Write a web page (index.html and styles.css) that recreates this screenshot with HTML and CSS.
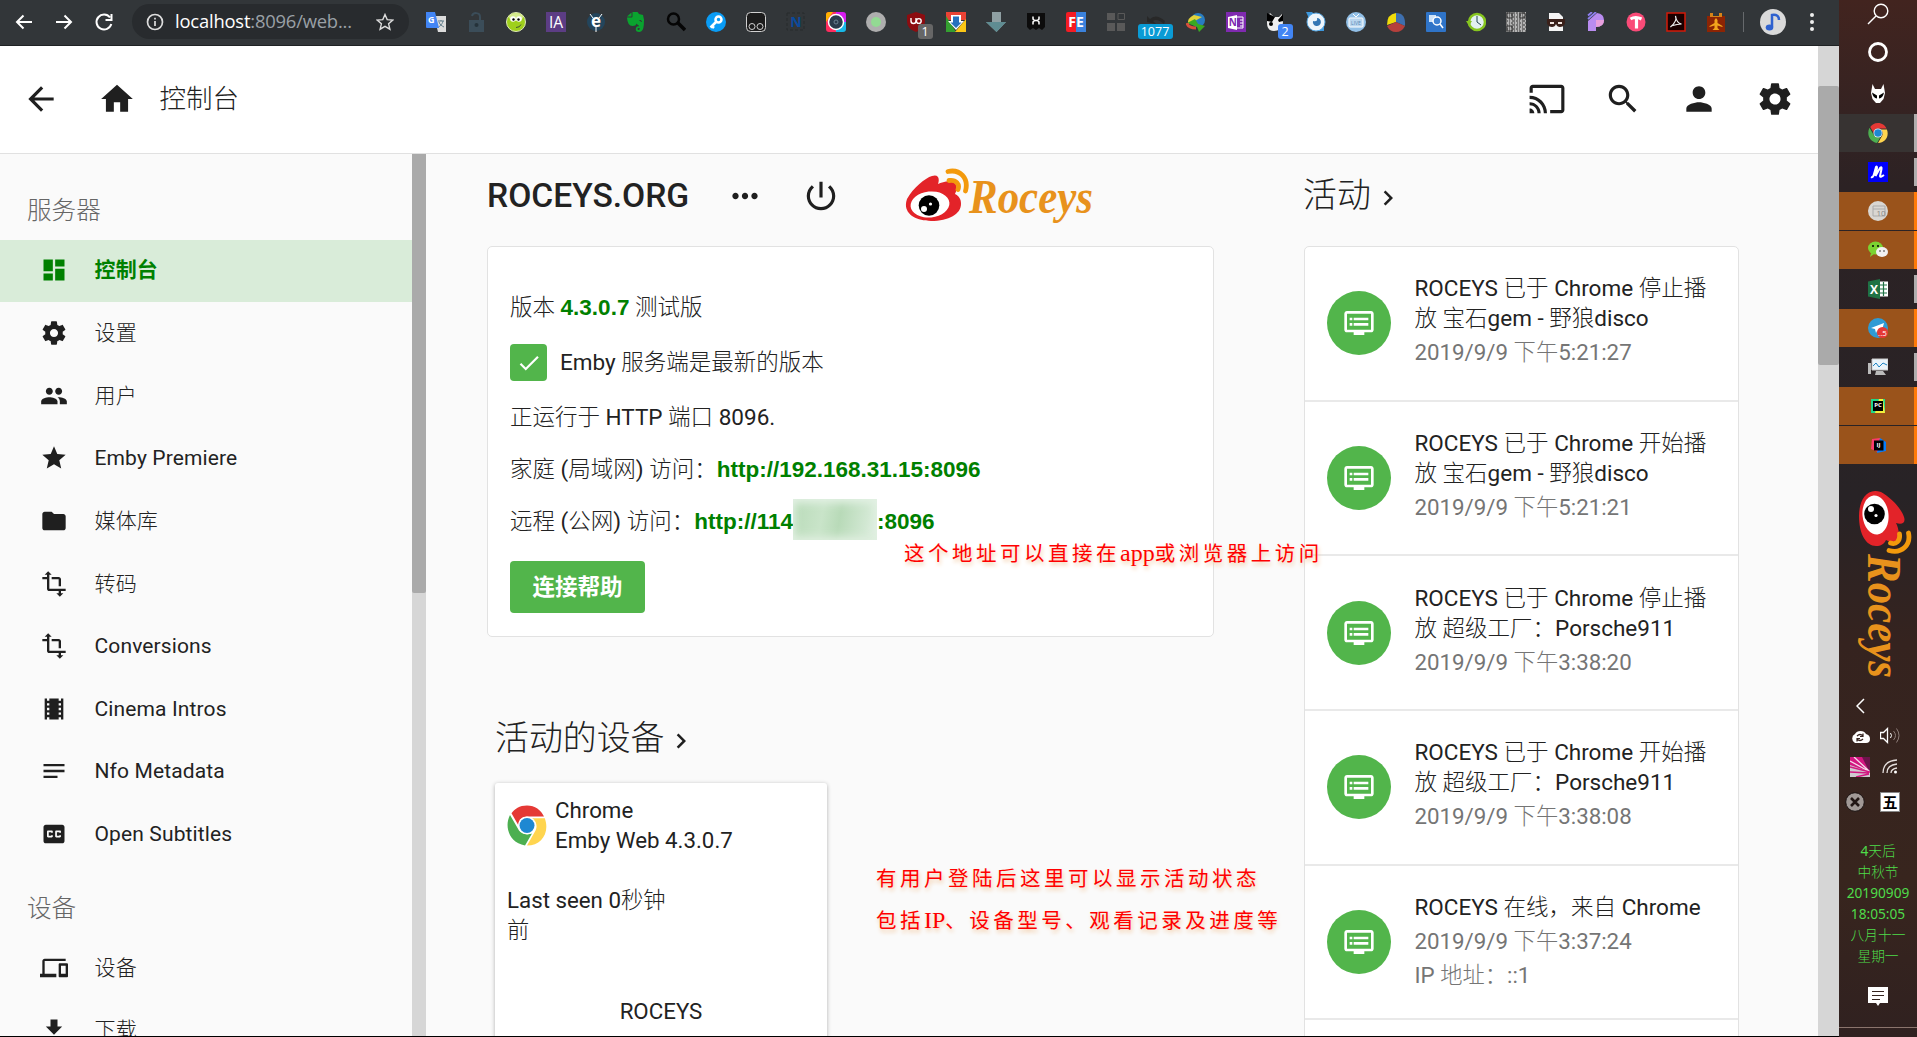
FILE: index.html
```html
<!DOCTYPE html>
<html lang="zh-CN">
<head>
<meta charset="utf-8">
<title>控制台</title>
<link rel="stylesheet" href="styles.css">
</head>
<body>
<svg class="sprite" aria-hidden="true">
  <symbol id="back" viewBox="0 0 24 24"><path d="M20 11H7.83l5.59-5.59L12 4l-8 8 8 8 1.41-1.41L7.83 13H20v-2z"/></symbol>
  <symbol id="home" viewBox="0 0 24 24"><path d="M10 20v-6h4v6h5v-8h3L12 3 2 12h3v8z"/></symbol>
  <symbol id="cast" viewBox="0 0 24 24"><path d="M21 3H3c-1.100 0-2 .9-2 2v3h2V5h18v14h-7v2h7c1.100 0 2-.9 2-2V5c0-1.100-.9-2-2-2zM1 18v3h3c0-1.660-1.340-3-3-3zm0-4v2c2.760 0 5 2.240 5 5h2c0-3.870-3.130-7-7-7zm0-4v2c4.970 0 9 4.030 9 9h2c0-6.080-4.930-11-11-11z"/></symbol>
  <symbol id="search" viewBox="0 0 24 24"><path d="M15.500 14h-.79l-.28-.27C15.410 12.590 16 11.110 16 9.500 16 5.910 13.090 3 9.500 3S3 5.910 3 9.500 5.910 16 9.500 16c1.610 0 3.090-.59 4.230-1.570l.27.28v.79l5 4.990L20.490 19l-4.990-5zm-6 0C7.010 14 5 11.990 5 9.500S7.010 5 9.500 5 14 7.010 14 9.500 11.990 14 9.500 14z"/></symbol>
  <symbol id="person" viewBox="0 0 24 24"><path d="M12 12c2.210 0 4-1.790 4-4s-1.790-4-4-4-4 1.790-4 4 1.790 4 4 4zm0 2c-2.670 0-8 1.340-8 4v2h16v-2c0-2.660-5.330-4-8-4z"/></symbol>
  <symbol id="gear" viewBox="0 0 24 24"><path d="M19.430 12.980c.04-.32.07-.64.07-.98s-.03-.66-.07-.98l2.110-1.650c.19-.15.24-.42.12-.64l-2-3.460c-.12-.22-.39-.3-.61-.22l-2.490 1c-.52-.4-1.080-.73-1.690-.98l-.38-2.650C14.460 2.180 14.250 2 14 2h-4c-.25 0-.46.18-.49.42l-.38 2.650c-.61.25-1.170.59-1.690.98l-2.490-1c-.23-.09-.49 0-.61.22l-2 3.460c-.13.22-.07.49.12.64l2.110 1.650c-.04.32-.07.65-.07.98s.03.66.07.98l-2.110 1.650c-.19.15-.24.42-.12.64l2 3.460c.12.22.39.3.61.22l2.490-1c.52.4 1.080.73 1.690.98l.38 2.650c.03.24.24.42.49.42h4c.25 0 .46-.18.49-.42l.38-2.650c.61-.25 1.170-.59 1.690-.98l2.490 1c.23.09.49 0 .61-.22l2-3.460c.12-.22.07-.49-.12-.64l-2.110-1.650zM12 15.500c-1.930 0-3.500-1.570-3.500-3.500s1.570-3.500 3.500-3.500 3.500 1.570 3.500 3.500-1.570 3.500-3.500 3.500z"/></symbol>
  <symbol id="dash" viewBox="0 0 24 24"><path d="M3 13h8V3H3v10zm0 8h8v-6H3v6zm10 0h8V11h-8v10zm0-18v6h8V3h-8z"/></symbol>
  <symbol id="people" viewBox="0 0 24 24"><path d="M16 11c1.660 0 2.990-1.340 2.990-3S17.660 5 16 5s-3 1.340-3 3 1.340 3 3 3zm-8 0c1.660 0 2.990-1.340 2.990-3S9.660 5 8 5 5 6.340 5 8s1.340 3 3 3zm0 2c-2.330 0-7 1.170-7 3.500V19h14v-2.500c0-2.330-4.670-3.500-7-3.500zm8 0c-.29 0-.62.02-.97.05 1.160.84 1.970 1.970 1.970 3.450V19h6v-2.500c0-2.330-4.670-3.500-7-3.500z"/></symbol>
  <symbol id="star" viewBox="0 0 24 24"><path d="M12 17.270L18.180 21l-1.640-7.030L22 9.240l-7.190-.61L12 2 9.190 8.630 2 9.240l5.460 4.730L5.820 21z"/></symbol>
  <symbol id="folder" viewBox="0 0 24 24"><path d="M10 4H4c-1.100 0-2 .9-2 2v12c0 1.100.9 2 2 2h16c1.100 0 2-.9 2-2V8c0-1.100-.9-2-2-2h-8l-2-2z"/></symbol>
  <symbol id="transform" viewBox="0 0 24 24"><path d="M22 18v-2H8V4h2L7 1 4 4h2v2H2v2h4v8c0 1.100.9 2 2 2h8v2h-2l3 3 3-3h-2v-2h4zM10 8h6v6h2V8c0-1.100-.9-2-2-2h-6v2z"/></symbol>
  <symbol id="film" viewBox="0 0 24 24"><path d="M18 3v2h-2V3H8v2H6V3H4v18h2v-2h2v2h8v-2h2v2h2V3h-2zM8 17H6v-2h2v2zm0-4H6v-2h2v2zm0-4H6V7h2v2zm10 8h-2v-2h2v2zm0-4h-2v-2h2v2zm0-4h-2V7h2v2z"/></symbol>
  <symbol id="notes" viewBox="0 0 24 24"><path d="M3 18h12v-2H3v2zM3 6v2h18V6H3zm0 7h18v-2H3v2z"/></symbol>
  <symbol id="cc" viewBox="0 0 24 24"><path d="M19 4H5c-1.110 0-2 .9-2 2v12c0 1.100.89 2 2 2h14c1.100 0 2-.9 2-2V6c0-1.100-.9-2-2-2zm-8 7H9.500v-.5h-2v3h2V13H11v1c0 .55-.45 1-1 1H7c-.55 0-1-.45-1-1v-4c0-.55.45-1 1-1h3c.55 0 1 .45 1 1v1zm7 0h-1.500v-.5h-2v3h2V13H18v1c0 .55-.45 1-1 1h-3c-.55 0-1-.45-1-1v-4c0-.55.45-1 1-1h3c.55 0 1 .45 1 1v1z"/></symbol>
  <symbol id="devices" viewBox="0 0 24 24"><path d="M4 6h18V4H4c-1.100 0-2 .9-2 2v11H0v3h14v-3H4V6zm19 2h-6c-.55 0-1 .45-1 1v10c0 .55.45 1 1 1h6c.55 0 1-.45 1-1V9c0-.55-.45-1-1-1zm-1 9h-4v-7h4v7z"/></symbol>
  <symbol id="download" viewBox="0 0 24 24"><path d="M19 9h-4V3H9v6H5l7 7 7-7zM5 18v2h14v-2H5z"/></symbol>
  <symbol id="power" viewBox="0 0 24 24"><path d="M13 3h-2v10h2V3zm4.830 2.170l-1.420 1.420C17.990 7.860 19 9.810 19 12c0 3.870-3.130 7-7 7s-7-3.130-7-7c0-2.190 1.010-4.140 2.580-5.420L6.170 5.170C4.230 6.820 3 9.260 3 12c0 4.970 4.030 9 9 9s9-4.030 9-9c0-2.740-1.230-5.180-3.170-6.830z"/></symbol>
  <symbol id="more" viewBox="0 0 24 24"><path d="M6 10c-1.100 0-2 .9-2 2s.9 2 2 2 2-.9 2-2-.9-2-2-2zm12 0c-1.100 0-2 .9-2 2s.9 2 2 2 2-.9 2-2-.9-2-2-2zm-6 0c-1.100 0-2 .9-2 2s.9 2 2 2 2-.9 2-2-.9-2-2-2z"/></symbol>
  <symbol id="chevron" viewBox="0 0 24 24"><path d="M10 6L8.590 7.410 13.170 12l-4.580 4.590L10 18l6-6z"/></symbol>
  <symbol id="check" viewBox="0 0 24 24"><path d="M9 16.170L4.830 12l-1.420 1.410L9 19 21 7l-1.410-1.410z"/></symbol>
  <symbol id="dvr" viewBox="0 0 24 24"><path d="M21 3H3c-1.100 0-2 .9-2 2v12c0 1.100.9 2 2 2h5v2h8v-2h5c1.100 0 1.990-.9 1.990-2L23 5c0-1.100-.9-2-2-2zm0 14H3V5h18v12zm-2-9H8v2h11V8zm0 4H8v2h11v-2zM7 8H5v2h2V8zm0 4H5v2h2v-2z"/></symbol>
  <symbol id="chrome" viewBox="0 0 40 40">
    <path fill="#e53935" d="M20 0C12.500 0 7.500 3.500 4.500 7.800L11.500 20C11.500 14 15 11 20 11h17C34 4.500 28 0 20 0z"/>
    <path fill="#4caf50" d="M3 9.500C-3 21 2 37 18 40l7-12C20 30 14 28 12 25z"/>
    <path fill="#ffd54f" d="M37.800 12.800H25C29.500 16 31 21 28 26l-8 14c14.500 0 23-13 17.800-27.200z"/>
    <circle cx="20" cy="20" r="9" fill="#fff"/><circle cx="20" cy="20" r="7.500" fill="#1e88d2"/>
  </symbol>
  <symbol id="logo" viewBox="0 0 188 56">
    <path fill="#e32329" d="M27 8C20 10 8 20 2 31C-3 45 10 53 26 53C44 53 56 46 56 36C56 31 54 28 50 26C52 22 53 16 48 14C44 12 37 14 33 16C35 10 33 6 27 8z"/>
    <ellipse cx="25" cy="36.500" rx="19.500" ry="13" fill="#fff" transform="rotate(-6 25 36.500)"/>
    <circle cx="24" cy="37.500" r="10.300" fill="#000"/>
    <circle cx="19" cy="41" r="3" fill="#fff"/><circle cx="25.500" cy="36" r="1.600" fill="#fff"/>
    <path d="M43 3.500C55 1 64 10 60.500 23M44 12.500C51 11.500 55 16 53 21.500" fill="none" stroke="#f39a0c" stroke-width="4.800" stroke-linecap="round"/>
    <text x="64" y="44.500" textLength="124" lengthAdjust="spacingAndGlyphs" class="logo-text">Roceys</text>
  </symbol>
</svg>

<div class="browser">
  <div class="toolbar">
    <div class="nav">
      <svg viewBox="0 0 20 20"><path d="M18 10H3M9.500 3.500L3 10l6.500 6.500"/></svg>
      <svg viewBox="0 0 20 20"><path d="M2 10h15M10.500 3.500L17 10l-6.500 6.500"/></svg>
      <svg viewBox="0 0 20 20"><path d="M16 5.500A7.500 7.500 0 1 0 17.300 12M17.500 2v6h-6"/></svg>
    </div>
    <div class="omnibox">
      <svg class="info" viewBox="0 0 18 18"><circle cx="9" cy="9" r="7.500"/><path d="M9 8v5M9 4.800v1.800"/></svg>
      <span class="url"><b>localhost</b>:8096/web...</span>
      <svg class="fav" viewBox="0 0 18 18"><path d="M9 1.500l2.200 5.100 5.600.5-4.200 3.700 1.300 5.400L9 13.300l-4.900 2.900 1.300-5.400L1.200 7.100l5.600-.5z"/></svg>
    </div>
    <div class="exts">
      <i><svg viewBox="0 0 20 20"><path fill="#dcdcdc" d="M8 4h12v16H12z"/><path d="M12 9h6M15 8v1M17 9c-1 4-3 5-4.500 6M13 10c1 3 3 4 5 5" stroke="#607d8b" fill="none"/><path fill="#4285f4" d="M0 0h9l4 16H1a1 1 0 0 1-1-1z"/><text x="2" y="11" font-size="9" font-weight="700" fill="#fff">G</text></svg></i>
      <i><svg viewBox="0 0 20 20"><path fill="#3b4d59" d="M3 8h15v12H3z"/><path d="M6 4c1-4 8-4 8 1v3" fill="none" stroke="#3b4d59" stroke-width="2"/><circle cx="10.500" cy="13" r="2" fill="#25323a"/></svg></i>
      <i><svg viewBox="0 0 20 20"><circle cx="10" cy="10" r="9.500" fill="#9fd01c" stroke="#dfe8b8"/><ellipse cx="10" cy="5" rx="7" ry="4" fill="#d6ec8e"/><circle cx="7" cy="7" r="2.800" fill="#fff"/><circle cx="13" cy="7" r="2.800" fill="#fff"/><circle cx="7.500" cy="7.500" r="1.200"/><circle cx="12.500" cy="7.500" r="1.200"/><path d="M10 15.500q4 0 5-3" fill="none" stroke="#453"/></svg></i>
      <i><svg viewBox="0 0 20 20"><path fill="#5c3d84" d="M0 0h20v20H0z"/><text x="10" y="15.500" font-size="15.500" text-anchor="middle" fill="#fff">IA</text></svg></i>
      <i><svg viewBox="0 0 20 20"><circle cx="10" cy="10" r="9" fill="#23455c"/><text x="10" y="15" font-size="17" font-weight="700" text-anchor="middle" fill="#fff">e</text><path d="M4 2l3 4M16 2l-3 4M10 14v6" stroke="#fff"/></svg></i>
      <i><svg viewBox="0 0 20 20"><path fill="#0aa32f" d="M6.500 0h5l1.500 2 4 1q1.500 4 .8 10-.5 7-4.500 7-4 0-3.500-3.500.5-3 3.700-2v1.500q-2-.5-2 1 0 1.200 1.500 1 1.500-1-.2-4.500-1.800-1-2.300-2-.5 2.500-4 2.500-5 0-5.500-8.500h4.500q1 0 1-1z"/><path d="M1 4.500L5.500.5v4z" fill="#0aa32f"/><path d="M13.500 8.500q2-.5 2 1.500" stroke="#323639" fill="none"/></svg></i>
      <i><svg viewBox="0 0 20 20"><circle cx="7.500" cy="7" r="5.500" fill="none" stroke="#050505" stroke-width="2.500"/><path d="M12 11l7 7" stroke="#050505" stroke-width="3.500"/></svg></i>
      <i><svg viewBox="0 0 20 20"><circle cx="10" cy="10" r="10" fill="#0a9cf5"/><circle cx="12.500" cy="7.500" r="3" fill="none" stroke="#fff" stroke-width="2.500"/><path d="M10.500 9.500L4.500 15.500M6 14l2 2" stroke="#fff" stroke-width="2.500"/></svg></i>
      <i><svg viewBox="0 0 20 20"><rect x=".5" y=".5" width="19" height="19" rx="4" fill="#1c1c1c" stroke="#d0d0d0"/><circle cx="6" cy="14.500" r="3" fill="none" stroke="#d0d0d0"/><circle cx="14" cy="14.500" r="3" fill="none" stroke="#d0d0d0"/></svg></i>
      <i><svg viewBox="0 0 20 20"><rect x="1" y="1" width="17" height="17" fill="none" stroke="#272b2d" stroke-dasharray="3 2"/><text x="10" y="14.500" font-size="14" font-weight="700" text-anchor="middle" fill="#0a4a9c">N</text></svg></i>
      <i><svg viewBox="0 0 20 20"><path fill="#ff2b5e" d="M3 0h7v20H3a3 3 0 0 1-3-3V3a3 3 0 0 1 3-3z"/><path fill="#ffb300" d="M0 10V3a3 3 0 0 1 3-3h4z"/><path fill="#d61cf0" d="M10 0h7a3 3 0 0 1 3 3v7H10z"/><path fill="#18b9e8" d="M10 10h10v7a3 3 0 0 1-3 3h-7z"/><circle cx="10" cy="10" r="7.500" fill="#2b3b4b" stroke="#fff" stroke-width="1.500"/><circle cx="10" cy="10" r="2" fill="none" stroke="#6c8090"/></svg></i>
      <i><svg viewBox="0 0 20 20"><circle cx="10" cy="10" r="10" fill="#aeaeae"/><circle cx="10" cy="10" r="5" fill="#93da93"/></svg></i>
      <i><svg viewBox="0 0 20 20"><path fill="#8c0c10" d="M10 0l9 3v6q0 8-9 11Q1 17 1 9V3z"/><path d="M5 6v3q0 2.500 2.500 2.500T10 9V6" fill="none" stroke="#fff" stroke-width="1.400"/><circle cx="12.800" cy="9" r="2.400" fill="none" stroke="#fff" stroke-width="1.400"/></svg><span class="badge b-gray">1</span></i>
      <i><svg viewBox="0 0 20 20"><path fill="#ea4335" d="M0 0h20v8H0z"/><path fill="#34a030" d="M0 4l10 16H0z"/><path fill="#fbc716" d="M20 7v13H9z"/><path fill="#fff" d="M5 3h10v6h3l-8 9-8-9h3z"/><path fill="#2670bd" d="M7 4.500h6v6h2.500L10 16l-5.500-5.500H7z"/></svg></i>
      <i><svg viewBox="0 0 20 20"><path fill="#8fa0a3" d="M6 0h9v10h5l-9.500 10L0 10h6z"/><path fill="#5f8c92" d="M0 10h20l-9.500 10z"/></svg></i>
      <i><svg viewBox="0 0 20 20"><path fill="#0c0c0c" d="M1 1h18v14l-3 3-3-2-3 2-3-2-3 2-3-3z"/><path d="M7 4.500v2q0 2 3 2t3-2v-2M7 12.500v-2q0-2 3-2t3 2v2" fill="none" stroke="#fff" stroke-width="1.500"/></svg></i>
      <i><svg viewBox="0 0 20 20"><rect width="20" height="20" rx="2" fill="#f51c24"/><path fill="#3b82dc" d="M10 0h10v20H10z"/><text x="10" y="15" font-size="14" font-weight="700" text-anchor="middle" fill="#fff">FE</text></svg></i>
      <i><svg viewBox="0 0 20 20"><path fill="#595959" d="M1 1h8v7H1zM1 11h8v8H1zM11 11h8v8h-8z"/><path fill="none" stroke="#595959" d="M12 1.500h6.500v6H12z"/></svg></i>
      <i><svg viewBox="0 0 20 20"><path fill="#282828" d="M1 10V4l3 3q6-6 15 2l-1 3q-7-6-11-3l3 3z"/></svg><span class="badge b-cyan">1077</span></i>
      <i><svg viewBox="0 0 20 20"><circle cx="12" cy="8" r="7" fill="#287cc2"/><path fill="#e2d33a" d="M2 12Q1 6 8 3l8 2-9 5z"/><path fill="#3ba922" d="M9 7l3 5 7 2-6 6-2-5-10-4z"/><path d="M1 11q1 5 9 5" stroke="#d94e3b" fill="none" stroke-width="3"/></svg></i>
      <i><svg viewBox="0 0 20 20"><path fill="#7f2ab0" d="M0 0h20v20H0z"/><path fill="none" stroke="#fff" d="M11 5h6v11h-6M14 8h3M14 11h3M14 14h3"/><path fill="#fff" d="M2 5l9-2v15l-9-2z"/><text x="6.700" y="14" font-size="10" font-weight="700" text-anchor="middle" fill="#7f2ab0">N</text></svg></i>
      <i><svg viewBox="0 0 20 20"><path fill="#eee" d="M1 6l3-5 4 4h5l3-3 1 9q-2 8-9 8t-7-8z"/><path d="M1 1l8 4-3 5-5-1zM12 8l5-6v7l-4 1z"/><circle cx="5" cy="12" r="2"/></svg><span class="badge b-blue">2</span></i>
      <i><svg viewBox="0 0 20 20"><path fill="#3d97dc" d="M0 0h6l12 12v7H9z"/><circle cx="10" cy="10" r="9" fill="#eef6fc" stroke="#5aa8e2"/><path fill="#3477b5" d="M7 9a4 4 0 1 0 4-3q1 4-4 3z"/></svg></i>
      <i><svg viewBox="0 0 20 20"><circle cx="10" cy="10" r="10" fill="#91bfe6"/><rect x="3" y="6" width="14" height="9" rx="1" fill="#b9d5ee" stroke="#fff"/><path d="M7 2l3 3 3-3" stroke="#fff" fill="none"/><text x="10" y="12.500" font-size="5" text-anchor="middle" fill="#5686b5">LIVE</text></svg></i>
      <i><svg viewBox="0 0 20 20"><path fill="#f0dc0a" d="M10 10V1Q1 2 1 13z"/><path fill="#3e6fae" d="M10 10V1q10 0 9 13z"/><path fill="#b5403c" d="M10 10L1 14q3 6 9 6t9-6z"/></svg></i>
      <i><svg viewBox="0 0 20 20"><rect width="20" height="20" rx="1" fill="#2f74c8"/><path fill="#cfe3f8" d="M3 3h7v7H3z"/><circle cx="11" cy="9" r="4" fill="#3d81d2" stroke="#fff" stroke-width="1.500"/><path d="M14 12l3 4" stroke="#fff" stroke-width="1.600"/></svg></i>
      <i><svg viewBox="0 0 20 20"><circle cx="11" cy="10" r="8" fill="#e3f0f0" stroke="#86c51f" stroke-width="2.500"/><path d="M11 4v6l4 3" fill="none" stroke="#245"/><path fill="#86c51f" d="M0 9h6l-3 5z"/></svg></i>
      <i><svg viewBox="0 0 20 20"><path fill="#b4b4b4" d="M0 0h20v20H0z"/><path d="M0 1h20M0 5h20M0 9h20M0 13h20M0 17h20" stroke="#333" stroke-width="1" stroke-dasharray="2 1 1 2 3 1"/><path d="M0 3h20M0 7h20M0 11h20M0 15h20M0 19h20" stroke="#333" stroke-width="1" stroke-dasharray="1 2 1 1 2 1"/><path d="M1 1h5v5H1zM14 1h5v5h-5zM1 14h5v5H1z" fill="none" stroke="#333"/></svg></i>
      <i><svg viewBox="0 0 20 20"><path fill="#f4f4f4" d="M3 1h10l4 4v14H3z"/><path fill="#3a201a" d="M1 7h18q1 8-5 8-3 0-4-3-1 3-4 3-6 0-5-8z"/><path fill="#f0e5e0" d="M4 10h4v2H4zM12 10h4v2h-4z"/></svg></i>
      <i><svg viewBox="0 0 20 20"><path fill="#b98cf0" d="M2 12V9l9-8q7 1 7 7 0 7-8 7v4H2z"/><path fill="#e9a0dc" d="M18 8q0 7-8 7V8z"/><path d="M2 7l8-7M2 3.500L6 0" stroke="#8f7ff0" stroke-width="1.800"/></svg></i>
      <i><svg viewBox="0 0 20 20"><circle cx="10" cy="10" r="9.500" fill="#fa4b78"/><path d="M4.500 7q5-3 11 0M10.500 6.500v10" stroke="#fff" stroke-width="3.200" fill="none"/></svg></i>
      <i><svg viewBox="0 0 20 20"><path fill="#1b0000" stroke="#d31a08" stroke-width="1.500" d="M1 1h18v18H1z"/><path d="M9.500 4q2 5-5 11 1-2 11-3-5-1-6-8z" fill="none" stroke="#eee" stroke-width="1.200"/></svg></i>
      <i><svg viewBox="0 0 20 20"><path fill="#8c2404" d="M1 4h18v16H1z"/><path fill="#d78318" d="M4 1h3v3h6V1h3v4H4z"/><path fill="#f2a51c" d="M10 6l1.500 2v3l5 3v1l-5-1.500v2.500l2 2h-7l2-2v-2.500l-5 1.500v-1l5-3V8z"/></svg></i>
    </div>
    <span class="divider"></span>
    <svg class="avatar" viewBox="0 0 26 26"><circle cx="13" cy="13" r="13" fill="#dadada"/><path d="M12 18V6q7-1 7 5" fill="none" stroke="#2f62cf" stroke-width="2.500"/><ellipse cx="9.500" cy="18.500" rx="3.800" ry="3" fill="#2f62cf"/></svg>
    <svg class="kebab" viewBox="0 0 4 18"><circle cx="2" cy="2" r="2"/><circle cx="2" cy="9" r="2"/><circle cx="2" cy="16" r="2"/></svg>
  </div>

  <div class="viewport">
    <div class="page">
      <header class="header">
        <svg class="ic"><use href="#back"/></svg>
        <svg class="ic home"><use href="#home"/></svg>
        <h1>控制台</h1>
        <div class="actions">
          <svg class="ic"><use href="#cast"/></svg>
          <svg class="ic"><use href="#search"/></svg>
          <svg class="ic"><use href="#person"/></svg>
          <svg class="ic"><use href="#gear"/></svg>
        </div>
      </header>
      <div class="body">
        <nav class="sidebar">
          <h2>服务器</h2>
          <a class="on"><svg><use href="#dash"/></svg>控制台</a>
          <a><svg><use href="#gear"/></svg>设置</a>
          <a><svg><use href="#people"/></svg>用户</a>
          <a><svg><use href="#star"/></svg>Emby Premiere</a>
          <a><svg><use href="#folder"/></svg>媒体库</a>
          <a><svg><use href="#transform"/></svg>转码</a>
          <a><svg><use href="#transform"/></svg>Conversions</a>
          <a><svg><use href="#film"/></svg>Cinema Intros</a>
          <a><svg><use href="#notes"/></svg>Nfo Metadata</a>
          <a><svg><use href="#cc"/></svg>Open Subtitles</a>
          <h2 class="second">设备</h2>
          <a><svg><use href="#devices"/></svg>设备</a>
          <a><svg><use href="#download"/></svg>下载</a>
        </nav>
        <div class="sidebar-scroll"><div></div></div>
        <main class="main">
          <section class="left">
            <div class="server-title">
              <h3>ROCEYS.ORG</h3>
              <svg class="more"><use href="#more"/></svg>
              <svg class="power"><use href="#power"/></svg>
              <svg class="logo"><use href="#logo"/></svg>
            </div>
            <div class="card server">
              <p>版本 <b>4.3.0.7</b> 测试版</p>
              <p class="status"><span class="tick"><svg><use href="#check"/></svg></span>Emby 服务端是最新的版本</p>
              <p>正运行于 HTTP 端口 8096.</p>
              <p>家庭 (局域网) 访问：<b>http://192.168.31.15:8096</b></p>
              <p>远程 (公网) 访问：<b>http://114<span class="mosaic"></span>:8096</b></p>
              <button>连接帮助</button>
            </div>
            <h3 class="devices-title">活动的设备<svg><use href="#chevron"/></svg></h3>
            <div class="device">
              <div class="device-head"><svg><use href="#chrome"/></svg><div>Chrome<br>Emby Web 4.3.0.7</div></div>
              <div class="seen">Last seen 0秒钟前</div>
              <div class="user">ROCEYS</div>
            </div>
          </section>
          <section class="right">
            <h3>活动<svg><use href="#chevron"/></svg></h3>
            <div class="card feed">
              <article><span class="dot"><svg><use href="#dvr"/></svg></span><div><p>ROCEYS 已于 Chrome 停止播<br>放 宝石gem - 野狼disco</p><small>2019/9/9 下午5:21:27</small></div></article>
              <article><span class="dot"><svg><use href="#dvr"/></svg></span><div><p>ROCEYS 已于 Chrome 开始播<br>放 宝石gem - 野狼disco</p><small>2019/9/9 下午5:21:21</small></div></article>
              <article><span class="dot"><svg><use href="#dvr"/></svg></span><div><p>ROCEYS 已于 Chrome 停止播<br>放 超级工厂：Porsche911</p><small>2019/9/9 下午3:38:20</small></div></article>
              <article><span class="dot"><svg><use href="#dvr"/></svg></span><div><p>ROCEYS 已于 Chrome 开始播<br>放 超级工厂：Porsche911</p><small>2019/9/9 下午3:38:08</small></div></article>
              <article><span class="dot"><svg><use href="#dvr"/></svg></span><div><p>ROCEYS 在线，来自 Chrome</p><small>2019/9/9 下午3:37:24</small><small>IP 地址：::1</small></div></article>
            </div>
          </section>
        </main>
      </div>
    </div>
    <div class="page-scroll"><div></div></div>
  </div>
</div>

<aside class="taskbar">
  <div class="sys s1"><svg width="22" height="22" viewBox="0 0 22 22" fill="none" stroke="#fff" stroke-width="1.400"><circle cx="14" cy="8" r="6.800"/><path d="M9 13l-8 8"/></svg></div>
  <div class="sys s2"><svg width="20" height="20" viewBox="0 0 20 20"><circle cx="10" cy="10" r="8.500" fill="none" stroke="#fff" stroke-width="2.800"/></svg></div>
  <div class="sys s3"><svg width="16" height="20" viewBox="0 0 16 20"><path fill="#fff" d="M2.500 0L5 5h6l2.500-5L15 9l-1.500 6L10 19H6l-3.500-4L1 9z"/><path d="M2 8.500l5 3v3q-4-.5-5-6zM14 8.500l-5 3v3q4-.5 5-6z"/></svg></div>
  <div class="app focus"><svg width="20" height="20"><use href="#chrome"/></svg></div>
  <div class="app"><svg width="20" height="20" viewBox="0 0 20 20"><path fill="#0000fa" d="M0 0h20v20H0z"/><path d="M3 15q2 1 3-3l2-7q1-1 1 1l-1.500 8L12 6q2-2 1.500 1L12 14q0 2 4-1" fill="none" stroke="#fff" stroke-width="2"/></svg></div>
  <div class="app alert"><svg width="20" height="20" viewBox="0 0 20 20"><circle cx="10" cy="10" r="10" fill="#d9d6d2"/><path d="M5 5h12v10H5zM5 8h12" fill="none" stroke="#aaa"/><text x="13" y="15" font-size="8" text-anchor="middle" fill="#888">10</text></svg></div>
  <div class="app alert"><svg width="20" height="18" viewBox="0 0 20 18"><ellipse cx="7.500" cy="7" rx="7.500" ry="6.500" fill="#7bd332"/><path d="M3 12l-1 4 4-3z" fill="#7bd332"/><ellipse cx="14" cy="11" rx="6" ry="5" fill="#f1f1f1"/><circle cx="5" cy="5" r="1"/><circle cx="10" cy="5" r="1"/><circle cx="12" cy="10" r=".7"/><circle cx="16" cy="10" r=".7"/></svg></div>
  <div class="app"><svg width="20" height="20" viewBox="0 0 20 20"><path fill="#fff" d="M10 2.500h10v15H10z"/><path d="M11 6h8M11 10h8M11 14h8M15.500 3v14" stroke="#1f7244" stroke-width="1.200"/><path fill="#1f7244" d="M0 2.500L12 0v20L0 17.500z"/><text x="6" y="14.500" font-size="12" font-weight="700" text-anchor="middle" fill="#fff">X</text></svg></div>
  <div class="app alert"><svg width="20" height="20" viewBox="0 0 20 20"><circle cx="10" cy="10" r="10" fill="#2f9bd4"/><path fill="#fff" d="M3 10l13-5-3 11-4-3-1 2-1-4z"/><circle cx="14.500" cy="14.500" r="5.500" fill="#e53935"/><text x="14.500" y="17.500" font-size="8" text-anchor="middle" fill="#fff">..5</text></svg></div>
  <div class="app"><svg width="20" height="20" viewBox="0 0 20 20"><path fill="#bbb" d="M0 6h3v11H0zM8 14h7l3 4H7z"/><path fill="#eaf4fb" stroke="#ccc" d="M4 2h16v11H4z"/><path d="M5 9l3-3 3 4 4-4 4 2" fill="none" stroke="#1c83c4"/></svg></div>
  <div class="app alert"><svg width="14" height="14" viewBox="0 0 14 14"><path fill="#21d789" d="M0 0h14v14H0z"/><path fill="#f6f03a" d="M8 0h4l2 14H4z"/><path d="M2 2h10v10H2z"/><text x="7" y="8" font-size="6" font-weight="700" text-anchor="middle" fill="#fff">PC</text></svg></div>
  <div class="app alert"><svg width="15" height="15" viewBox="0 0 15 15"><path fill="#fc3a6d" d="M1 1l8-1-2 14-7-3z"/><path fill="#087cfa" d="M9 0l6 4v9l-9 2z"/><path d="M3 2.500h9.500v10H3z"/><text x="7.500" y="9" font-size="6" font-weight="700" text-anchor="middle" fill="#fff">IJ</text></svg></div>
  <div class="vlogo"><svg width="56" height="188" viewBox="0 0 56 188"><g transform="translate(56 0) rotate(90)"><use href="#logo" width="188" height="56"/></g></svg></div>
  <div class="tray">
    <svg width="9" height="16" viewBox="0 0 9 16" fill="none" stroke="#fff" stroke-width="1.500"><path d="M8 1L1 8l7 7"/></svg><span></span>
    <svg width="20" height="14" viewBox="0 0 20 14"><path fill="#fff" d="M5 14a5 5 0 0 1 0-9 6 5 0 0 1 11 0q4 1 4 5 0 4-4 4z"/><path d="M7 7q3-3 6 0M13 10q-3 3-6 0M13 4.500v3h-3M7 12.500v-3h3" stroke="#35231f" fill="none" stroke-width="1.200"/></svg>
    <svg width="20" height="17" viewBox="0 0 20 17" fill="none" stroke="#fff"><path d="M.5 5.500h3l4-4v14l-4-4h-3z" stroke-width="1.300"/><path d="M10.500 6q2 2.500 0 5"/><path d="M13.500 4q4 4.500 0 9M16.500 1.500q5 7 0 14" stroke="#8d7d79"/></svg>
    <svg width="20" height="20" viewBox="0 0 20 20"><path fill="#cfc9cf" d="M0 0h20v20H0z"/><path fill="#d31580" d="M0 0h15l5 15L0 8z"/><path fill="#6c144c" d="M12 0h8v16z"/><path d="M20 15L0 4M20 15L4 0" stroke="#f5dbe9" stroke-width="1.300"/><path d="M20 15L0 10M19 16L0 15M19 17L6 20" stroke="#d31580" stroke-width="1.500"/></svg>
    <svg width="16" height="15" viewBox="0 0 16 15" fill="none" stroke="#e5dedc" stroke-width="1.300"><path d="M1 14Q1 2 15 1M5 14q0-8 10-9M9 14q0-4 6-5"/><circle cx="13.500" cy="13" r="1.500" fill="#fff" stroke="none"/></svg>
    <svg class="close" width="20" height="20" viewBox="0 0 20 20"><circle cx="10" cy="10" r="9.300" fill="#a19996" stroke="#1a1211"/><path d="M6 6l8 8M14 6l-8 8" stroke="#221715" stroke-width="2.600"/></svg>
    <span class="ime">五</span>
  </div>
  <div class="clock"><span>4天后</span><span>中秋节</span><span>20190909</span><span>18:05:05</span><span>八月十一</span><span>星期一</span></div>
  <svg class="notif" width="20" height="20" viewBox="0 0 20 20"><path fill="#fff" d="M0 0h20v16h-8l-2 3-2-3H0z"/><path d="M4 4.500h12M4 8.500h12M4 12.500h8" stroke="#35231f"/></svg>
  <div class="show-desktop"></div>
</aside>

<p class="note n1">这个地址可以直接在<span>app</span>或浏览器上访问</p>
<p class="note n2">有用户登陆后这里可以显示活动状态</p>
<p class="note n3">包括<span>IP</span>、设备型号、观看记录及进度等</p>
</body>
</html>
```
FILE: styles.css
```css
* { box-sizing: border-box; }
body { margin: 0; width: 1917px; height: 1037px; overflow: hidden; display: flex; position: relative;
  font-family: Roboto, "Noto Sans CJK SC Light", "Noto Sans CJK SC DemiLight", "Noto Sans CJK SC", sans-serif; color: #222; background: #fafafa; }
h1, h2, h3, p { margin: 0; font-weight: 400; }
svg { display: block; flex: none; }
.sprite { position: absolute; width: 0; height: 0; }
.logo-text { font: italic 700 49px "Liberation Serif", serif; fill: #e8921c; }

.browser { width: 1839px; height: 1037px; display: flex; flex-direction: column; border-bottom: 1px solid #000; }

/* Browser toolbar */
.toolbar { height: 46px; flex: none; background: #323639; border-bottom: 1px solid #1f2224; display: flex; align-items: center; padding: 0 0 2px 4px; }
.nav { display: flex; width: 128px; }
.nav svg { width: 20px; height: 20px; margin-left: 10px; margin-right: 10px; fill: none; stroke: #fff; stroke-width: 2; }
.omnibox { width: 277px; height: 35px; border-radius: 18px; background: #282b2e; display: flex; align-items: center; padding-left: 14px; flex: none; }
.omnibox svg { fill: none; stroke: #ddd; stroke-width: 1.700; width: 18px; height: 18px; }
.omnibox .fav { stroke-width: 1.400; }
.url { font: 18.400px/28px "Open Sans", "Noto Sans", sans-serif; color: #9aa0a6; width: 201px; margin: -2px 0 0 11px; letter-spacing: -.2px; white-space: nowrap; }
.url b { font-weight: 400; color: #fff; }
.exts { display: flex; width: 1320px; margin-left: 6.500px; flex: none; }
.exts i { width: 40px; height: 20px; display: flex; justify-content: center; position: relative; font-style: normal; font-family: "Open Sans", sans-serif; }
.exts svg { width: 20px; height: 20px; }
.badge { position: absolute; top: 12px; height: 15px; border-radius: 3px; color: #fff; font-size: 12.500px; line-height: 15px; text-align: center; }
.b-gray { left: 22px; width: 15px; background: #666; }
.b-cyan { left: 2px; width: 35px; background: #0a9bd5; }
.b-blue { left: 22px; width: 15px; background: #4285f4; }
.divider { width: 1px; height: 20px; background: #66696c; margin-left: 7px; }
.avatar { width: 26px; height: 26px; margin-left: 16px; }
.kebab { width: 4px; height: 18px; margin-left: 24px; fill: #eee; }

/* Page */
.viewport { flex: 1; min-height: 0; display: flex; }
.page { width: 1818px; display: flex; flex-direction: column; overflow: hidden; }
.page-scroll { width: 21px; background: #d6d6d6; padding-top: 40px; }
.page-scroll div { height: 279px; background: #aaa; border-radius: 2px; }
.header { height: 108px; flex: none; background: #fff; border-bottom: 1px solid #e1e1e1; display: flex; align-items: center; padding: 0 24px 1px 22px; }
.ic { width: 38px; height: 38px; fill: #1f1f1f; }
.home { margin-left: 37.500px; }
.header h1 { font-size: 26.500px; line-height: 40px; margin-left: 24px; flex: 1; }
.actions { display: flex; gap: 37.900px; }
.body { flex: 1; min-height: 0; display: flex; }

.sidebar { width: 412px; overflow: hidden; }
.sidebar h2 { height: 86px; padding: 43px 0 0 27px; font-size: 24.600px; line-height: 28px; color: #666; }
.sidebar h2.second { height: 71px; padding-top: 29px; }
.sidebar a { height: 62.650px; display: flex; align-items: center; padding: 0 0 2px 39.500px; font-size: 21px; line-height: 30px; letter-spacing: .13px; color: #222; }
.sidebar a svg { width: 28px; height: 28px; margin-right: 27px; fill: #1f1f1f; }
.sidebar a.on { height: 62px; margin-bottom: .65px; background: #d9ecd9; color: green; font-weight: 700; font-family: Roboto, "Noto Sans CJK SC", sans-serif; }
.sidebar a.on svg { fill: green; }
.sidebar-scroll { width: 14px; background: #d6d6d6; }
.sidebar-scroll div { height: 439px; background: #aaa; border-radius: 0 0 2px 2px; }

.main { flex: 1; display: flex; }
.left { width: 727px; margin-left: 61px; }
.server-title { display: flex; height: 93px; align-items: center; padding-bottom: 10px; }
.server-title h3 { font-size: 33.600px; font-weight: 500; width: 238.500px; }
.server-title svg { fill: #1f1f1f; }
.more { width: 38px; height: 38px; }
.power { width: 38px; height: 38px; margin-left: 38px; }
.logo { width: 188px; height: 56px; margin-left: 65.500px; }
.card { background: #fff; border: 1px solid #e2e2e2; border-radius: 5px; }
.server { height: 391px; padding: 45px 22px 0; margin-top: -1px; font-size: 22.500px; }
.server p { height: 30px; line-height: 30px; margin-bottom: 22px; white-space: nowrap; }
.server p b { color: green; font-family: "Liberation Sans", sans-serif; font-size: 22.500px; }
.server p.status { height: 37px; line-height: 37px; display: flex; margin: 22px 0 21px; }
.tick { width: 37px; height: 37px; border-radius: 4px; background: #52b54b; margin-right: 13px; display: flex; align-items: center; justify-content: center; }
.tick svg { width: 26px; height: 26px; fill: #fff; }
.mosaic { display: inline-block; width: 84px; height: 41px; margin: -12px 0 -4px; vertical-align: middle; background: linear-gradient(100deg, #b9dbb9, #c9e4c9 35%, #b8dab8 55%, #d2e8d3 85%, #e3f1e4); box-shadow: inset 0 4px 8px #e3f1e4, inset 0 -4px 8px #dceddc; }
.server button { width: 135px; height: 52px; margin-top: 25px; display: block; border: 0; border-radius: 4px; background: #52b54b; color: #fff; font: 700 22.500px/50px Roboto, "Noto Sans CJK SC", sans-serif; padding: 0; }
.devices-title, .right h3 { display: flex; align-items: center; font-size: 33.900px; line-height: 44px; }
.devices-title { margin: 80px 0 0 8px; height: 44px; }
.devices-title svg, .right h3 svg { width: 30px; height: 30px; fill: #1f1f1f; margin: 4px 0 0 2px; }
.device { width: 332px; height: 330px; margin: 22px 0 0 8px; background: #fff; border-radius: 3px; box-shadow: 0 1px 4px rgba(0,0,0,.3); padding: 12px; font-size: 22.300px; line-height: 30px; }
.device-head { display: flex; align-items: center; gap: 8px; height: 60px; }
.device-head svg { width: 40px; height: 41px; }
.seen { width: 170px; margin-top: 30px; }
.user { text-align: center; margin-top: 51px; }

.right { width: 436px; margin-left: 90px; }
.right h3 { height: 92px; padding-bottom: 8px; margin-left: -1px; }
.feed { height: 900px; font-size: 22.500px; width: 435px; }
.feed article { height: 154.650px; border-bottom: 2px solid #e9e9e9; display: flex; align-items: center; padding: 0 0 0 22px; }
.feed article > div { min-height: 100px; }
.dot { width: 64px; height: 64px; border-radius: 50%; background: #52b54b; display: flex; align-items: center; justify-content: center; margin-right: 23.500px; flex: none; }
.dot svg { width: 32px; height: 32px; fill: #fff; }
.feed p { line-height: 30px; white-space: nowrap; margin-bottom: 2px; }
.feed small { display: block; font-size: 22.300px; line-height: 34px; color: #757575; }

/* Desktop taskbar */
.taskbar { width: 78px; height: 1037px; background: linear-gradient(#42241f, #2c2224 18%, #282326 48%, #35231f 62%, #38251e 85%, #302120); display: flex; flex-direction: column; align-items: center; font-family: "Open Sans", sans-serif; }
.sys { display: flex; align-items: center; justify-content: center; flex: none; }
.s1 { height: 28px; } .s2 { height: 48px; } .s3 { height: 35px; margin-bottom: 3px; }
.app { width: 78px; height: 38px; margin-bottom: 1px; flex: none; display: flex; align-items: center; justify-content: center; background: linear-gradient(#b0aeae, #b0aeae) right center / 3px 28px no-repeat; }
.app.focus { background: linear-gradient(#b0aeae, #b0aeae) right / 3px 100% no-repeat #373332; }
.app.alert { background: linear-gradient(#ff7a08, #ff7a08) right / 3px 100% no-repeat #9a531b; }
.vlogo { margin: 24.500px 0 0 12px; }
.tray { display: grid; grid-template-columns: 30px 30px; grid-template-rows: 28px 32px 30px 40px; justify-items: center; align-items: center; margin: 14px 6px 0 0; }
.close { margin-left: -10px; }
.ime { width: 20px; height: 20px; background: #fff; border: 1px solid #888; color: #000; font: 700 15px/17px "Noto Sans CJK SC", sans-serif; text-align: center; }
.clock { display: flex; flex-direction: column; align-items: center; margin-top: 18px; color: #4fdc4a; font: 13.700px/21px "Noto Sans", "Noto Sans CJK SC Light", "Noto Sans CJK SC", sans-serif; }
.notif { margin-top: 21px; }
.show-desktop { width: 78px; height: 1px; background: #8b746d; margin-top: 20px; }

/* Annotations laid over the window */
.note { position: absolute; color: #f00; font: 20.500px/30px "Noto Sans CJK SC", serif; letter-spacing: 3.500px; white-space: nowrap; text-shadow: 1px 3px 4px #f2c9a0; }
.note span { font-family: "Liberation Serif", serif; font-size: 24px; letter-spacing: 0; }
.n1 { left: 904px; top: 537px; }
.n2 { left: 876px; top: 862px; }
.n3 { left: 876px; top: 904px; }
```
